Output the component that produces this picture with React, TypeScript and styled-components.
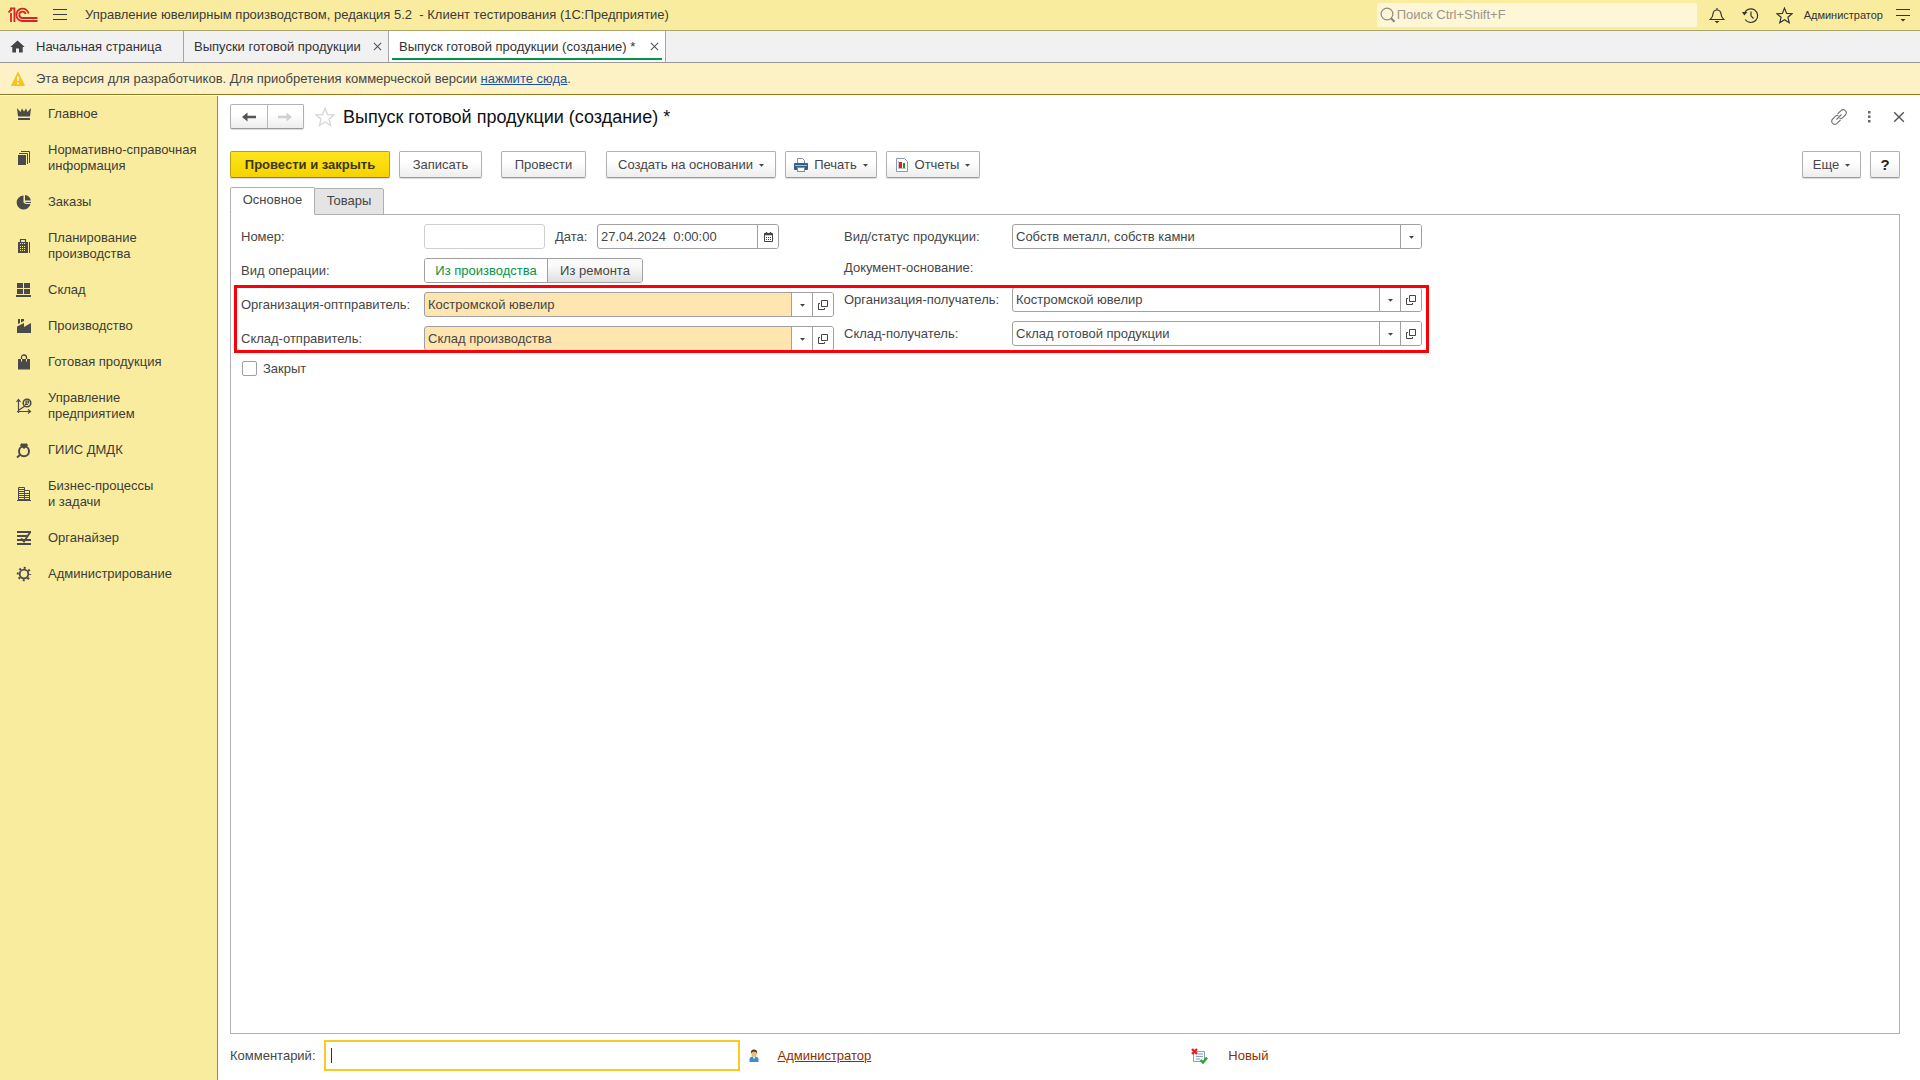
import React from "react";
import styled, { createGlobalStyle, css } from "styled-components";

const GlobalStyle = createGlobalStyle`
  *, *::before, *::after { box-sizing: border-box; }
  body { margin: 0; background: #fff; }
  body, button, input, select {
    font-family: "Liberation Sans", Arial, sans-serif;
    font-size: 13px;
    line-height: 16px;
    color: #464646;
  }
  button { cursor: pointer; }
  svg { display: block; flex: none; }
`;

/* ---------- frame ---------- */

const Page = styled.div`
  display: flex;
  flex-direction: column;
  min-height: 100vh;
`;

const TopBar = styled.header`
  display: flex;
  align-items: center;
  height: 31px;
  padding: 0 1px 0 8px;
  background: #faec9e;
  border-bottom: 1px solid #aaa56a;
  color: #3a3a3a;
`;

const IconButton = styled.button<{ $w: number }>`
  display: flex;
  align-items: center;
  justify-content: center;
  width: ${(p) => p.$w}px;
  height: 24px;
  padding: 0;
  border: 0;
  background: none;
  color: inherit;
`;

const AppTitle = styled.span`
  flex: 1;
  margin-left: 3px;
  white-space: pre;
`;

const SearchBox = styled.label`
  display: flex;
  align-items: center;
  gap: 1px;
  width: 320px;
  height: 24px;
  margin-right: 3px;
  padding-left: 3px;
  border-radius: 2px;
  background: #fdf7d8;
  color: #8d8b80;
`;

const SearchInput = styled.input`
  flex: 1;
  padding: 0 0 1px;
  border: 0;
  outline: 0;
  background: none;
  &::placeholder { color: #99968a; opacity: 1; }
`;

const UserName = styled.a`
  margin: 0 4px 0 2px;
  font-size: 11px;
  color: #333;
  text-decoration: none;
`;

const TabStrip = styled.nav`
  display: flex;
  height: 32px;
  background: #f1f1f1;
  border-bottom: 1px solid #999;
`;

const WindowTab = styled.div<{ $active?: boolean; $w: number }>`
  display: flex;
  align-items: center;
  justify-content: space-between;
  gap: 6px;
  min-width: ${(p) => p.$w}px;
  padding: 0 5px 0 10px;
  border-right: 1px solid #a6a6a6;
  ${(p) =>
    p.$active &&
    css`
      position: relative;
      background: #fff;
      &::after {
        content: "";
        position: absolute;
        inset: auto 3px 2px;
        height: 2px;
        background: #009646;
      }
    `}
`;

const TabLink = styled.a`
  display: flex;
  align-items: center;
  gap: 11px;
  color: #333;
  text-decoration: none;
  white-space: nowrap;
`;

const Notice = styled.div`
  display: flex;
  align-items: center;
  gap: 11px;
  height: 32px;
  padding-left: 11px;
  background: #fdf1c6;
  border-bottom: 1px solid #94781c;
`;

const NoticeLink = styled.a`
  color: #1d52a8;
`;

const Body = styled.div`
  display: flex;
  flex: 1;
`;

const Sidebar = styled.nav`
  width: 218px;
  flex: none;
  margin-top: 1px;
  background: #faec9e;
  border-right: 1px solid #8f8a5c;
`;

const SideLink = styled.a`
  display: flex;
  align-items: center;
  gap: 16px;
  padding: 10px 8px 10px 16px;
  color: #3c3c3c;
  text-decoration: none;
  white-space: pre-line;
`;

/* ---------- document ---------- */

const Main = styled.main`
  display: flex;
  flex-direction: column;
  flex: 1;
  min-width: 0;
  padding: 9px 20px 9px 12px;
`;

const TitleRow = styled.div`
  display: flex;
  align-items: center;
  height: 25px;
  color: #6b6b6b;
`;

const Title = styled.h1`
  flex: 1;
  margin: 0 0 0 8px;
  font-size: 18px;
  line-height: 24px;
  font-weight: 400;
  color: #111;
`;

const buttonFace = css`
  border: 1px solid #b0b0b0;
  border-bottom-color: #999;
  border-radius: 2px;
  background: linear-gradient(#fff 40%, #ededed);
  box-shadow: 0 1px 1px rgba(0, 0, 0, 0.15);
`;

const NavPair = styled.div`
  display: flex;
  width: 74px;
  height: 25px;
  margin-right: 11px;
  ${buttonFace}
`;

const NavButton = styled.button`
  flex: 1;
  display: grid;
  place-items: center;
  padding: 0;
  border: 0;
  background: none;
  color: #555;
  & + & { border-left: 1px solid #b8b8b8; color: #d0d0d0; }
`;

const HeadIcons = styled.div`
  display: flex;
  gap: 10px;
  margin-right: -9px;
`;

const Toolbar = styled.div`
  display: flex;
  gap: 9px;
  margin-top: 22px;
`;

const ToolButton = styled.button<{ $primary?: boolean; $w: number; $gap?: number }>`
  display: flex;
  align-items: center;
  justify-content: center;
  gap: 6px;
  min-width: ${(p) => p.$w}px;
  height: 27px;
  margin-left: ${(p) => p.$gap ?? 0}px;
  padding: 0 5px;
  white-space: nowrap;
  ${buttonFace}
  ${(p) =>
    p.$primary &&
    css`
      border-color: #b5a01a;
      border-bottom-color: #95830a;
      background: linear-gradient(#ffe51a, #f5d300);
      font-weight: 700;
      color: #3c3618;
    `}
`;

const HelpMark = styled.b`
  font-size: 15px;
  color: #222;
`;

const Spacer = styled.div`
  flex: 1;
`;

const PageTabs = styled.div`
  display: flex;
  align-items: flex-end;
  height: 28px;
  margin-top: 9px;
  margin-bottom: -1px;
`;

const PageTab = styled.button<{ $active?: boolean; $w: number }>`
  width: ${(p) => p.$w}px;
  height: 27px;
  padding: 0 0 2px;
  border: 1px solid #b0b0b0;
  border-radius: 2px 2px 0 0;
  background: #e4e4e4;
  & + & { margin-left: -1px; }
  ${(p) =>
    p.$active &&
    css`
      height: 28px;
      z-index: 1;
      background: #fff;
      border-bottom-color: #fff;
    `}
`;

const Sheet = styled.section`
  flex: 1;
  border: 1px solid #b0b0b0;
`;

const Form = styled.form`
  position: relative;
  display: flex;
  width: fit-content;
  gap: 10px;
  padding: 9px 9px 9px 10px;
`;

const Highlight = styled.div`
  position: absolute;
  inset: 70px 2px auto 3px;
  height: 68px;
  border: 3px solid #fb0007;
  pointer-events: none;
`;

const Column = styled.div`
  display: flex;
  flex-direction: column;
  gap: 9px;
`;

const Row = styled.div<{ $label: number }>`
  display: grid;
  grid-template-columns: ${(p) => p.$label}px 410px;
  align-items: center;
  min-height: 20px;
`;

const Inline = styled.div`
  display: flex;
  align-items: center;
`;

const Control = styled.div<{ $w?: number; $soft?: boolean; $fill?: string }>`
  display: flex;
  width: ${(p) => (p.$w ? `${p.$w}px` : "100%")};
  height: 25px;
  overflow: hidden;
  border: 1px solid ${(p) => (p.$soft ? "#cfcfcf" : "#a0a0a0")};
  border-radius: 3px;
  background: ${(p) => p.$fill ?? "#fff"};
`;

const TextInput = styled.input`
  flex: 1;
  min-width: 0;
  padding: 0 3px;
  border: 0;
  outline: 0;
  background: none;
`;

const SelectBox = styled.div`
  flex: 1;
  display: grid;
  grid-template-columns: 1fr 21px;
`;

const Select = styled.select`
  grid-area: 1 / 1 / 2 / 3;
  padding: 0 24px 0 3px;
  border: 0;
  outline: 0;
  appearance: none;
  background: none;
`;

const Arrow = styled.span`
  grid-area: 1 / 2;
  display: grid;
  place-items: center;
  border-left: 1px solid #a0a0a0;
  background: #fff;
  pointer-events: none;
`;

const FieldButton = styled.button`
  display: grid;
  place-items: center;
  width: 21px;
  padding: 0;
  border: 0;
  border-left: 1px solid #a0a0a0;
  background: #fff;
`;

const DateLabel = styled.label`
  width: 52px;
  padding-left: 10px;
`;

const Segments = styled(Control)`
  width: 219px;
`;

const Segment = styled.label<{ $w: number }>`
  display: grid;
  place-items: center;
  width: ${(p) => p.$w}px;
  background: linear-gradient(#fafafa 30%, #e0e0e0);
  & + & { border-left: 1px solid #a0a0a0; }
  &:has(input:checked) { background: #fff; color: #009646; }
  input { appearance: none; position: absolute; margin: 0; }
`;

const CheckRow = styled.label`
  display: flex;
  align-items: center;
  gap: 6px;
  height: 17px;
`;

const CheckBox = styled.input`
  appearance: none;
  width: 15px;
  height: 15px;
  margin: 0 0 0 1px;
  border: 1px solid #a0a0a0;
  border-radius: 2px;
  background: #fff;
`;

const Footer = styled.footer`
  display: flex;
  align-items: center;
  margin-top: 6px;
`;

const Comment = styled.input`
  width: 416px;
  height: 31px;
  margin: 0 9px 0 8px;
  padding: 0 6px;
  border: 2px solid #f9cb20;
  outline: 0;
  &:placeholder-shown {
    caret-color: transparent;
    background: linear-gradient(#333, #333) 5px center / 1px 15px no-repeat;
  }
`;

const UserLink = styled.a<{ $plain?: boolean }>`
  color: #8c2f00;
  text-decoration: ${(p) => (p.$plain ? "none" : "underline")};
`;

const Person = styled.span`
  width: 29px;
`;

const Status = styled.span`
  display: flex;
  align-items: center;
  gap: 20px;
  margin-left: 320px;
`;

/* ---------- drawings ---------- */

const Logo = () => (
  <svg width="30" height="16" viewBox="0 0 30 16" fill="none" stroke="#d8232a" strokeWidth="1.8">
    <path d="M0.500 5.400 3.400 2.500M3 15V6M3 4V1.400H6.400V15" />
    <path d="M20.600 6.500A6.200 6.200 0 1 0 14.600 14H29.500" />
    <path d="M17.600 7A3.200 3.200 0 1 0 14.600 11H29.500" />
  </svg>
);

const Burger = () => (
  <svg width="14" height="12" stroke="#3a3a3a" strokeWidth="1">
    <path d="M0 0.500H14M0 5.500H14M0 10.500H14" />
  </svg>
);

const SearchIcon = () => (
  <svg width="16" height="16" fill="none" stroke="currentColor" strokeWidth="1.2">
    <circle cx="7" cy="7" r="5.9" />
    <path d="M11 11.2 14.5 14.8" strokeWidth="2.2" />
  </svg>
);

const Bell = () => (
  <svg width="16" height="17" fill="none" stroke="#333" strokeWidth="1.2">
    <path d="M1.200 12.500H14.800C12.600 10.800 12.300 9.400 12 7C11.700 4.200 10.400 3 8 3C5.600 3 4.300 4.200 4 7C3.700 9.400 3.400 10.800 1.200 12.500ZM8 3V1" />
    <path d="M5.500 14H10.500L8 16.200Z" fill="#333" stroke="none" />
  </svg>
);

const HistoryIcon = () => (
  <svg width="17" height="17" fill="none" stroke="#333" strokeWidth="1.2">
    <path d="M2.600 6A6.800 6.800 0 1 1 3.200 12.500M9 4.500V8.800L11.500 11.500" />
    <path d="M0 5H5.400L2.300 8.400Z" fill="#333" stroke="none" />
  </svg>
);

const Star = ({ size, color }: { size: number; color: string }) => (
  <svg width={size} height={size} viewBox="0 0 20 20" fill="none" stroke={color} strokeWidth="1.4">
    <path d="M10 1.300 12.500 7.500 19 7.900 14 12.100 15.600 18.500 10 15 4.400 18.500 6 12.100 1 7.900 7.500 7.500Z" />
  </svg>
);

const Settings = () => (
  <svg width="14" height="14" stroke="#333">
    <path d="M0 1.500H14M0 7.500H14" />
    <path d="M4.500 11H9.500L7 13.500Z" fill="#333" stroke="none" />
  </svg>
);

const Home = () => (
  <svg width="15" height="13" fill="#444">
    <path d="M7.500 0.500 0.300 7H2.300V12.500H6V8.500H9V12.500H12.700V7H14.700Z" />
  </svg>
);

const Cross = ({ size }: { size: number }) => (
  <svg width={size} height={size} viewBox="0 0 10 10" fill="none" stroke="#555" strokeWidth="1.2">
    <path d="M1 1 9 9M9 1 1 9" />
  </svg>
);

const Warning = () => (
  <svg width="14" height="14">
    <path d="M7 0.500 13.500 13.500H0.500Z" fill="#fbc21a" stroke="#fbc21a" strokeLinejoin="round" />
    <path d="M7 4.500V9M7 10.500V12.300" stroke="#fff" strokeWidth="1.600" />
  </svg>
);

const ArrowLeft = ({ flip }: { flip?: boolean }) => (
  <svg width="14" height="10" viewBox="0 0 14 10">
    <path
      d={flip ? "M14 5 8.500 0.500V3.800H0V6.200H8.500V9.500Z" : "M0 5 5.500 0.500V3.800H14V6.200H5.500V9.500Z"}
      fill="currentColor"
    />
  </svg>
);

const LinkIcon = () => (
  <svg width="16" height="16" fill="none" stroke="#777" strokeWidth="1.100">
    <path d="M6.500 5 10 1.700A3 3 0 0 1 14.300 6L11 9.300Q9.800 10 8.500 9.300M9.500 11 6 14.300A3 3 0 0 1 1.700 10L5 6.700Q6.200 6 7.500 6.700M5.500 10.500 10.500 5.500" />
  </svg>
);

const Dots = () => (
  <svg width="3" height="12" fill="#666">
    <path d="M0 0H2.500V2.500H0ZM0 4.500H2.500V7H0ZM0 9H2.500V11.500H0Z" />
  </svg>
);

const Caret = () => (
  <svg width="5" height="5">
    <path d="M0 2H5L2.500 4.700Z" fill="#444" />
  </svg>
);

const Printer = () => (
  <svg width="14" height="14">
    <path d="M3.500 6V0.500H8.500L10.500 2.500V6" fill="#fff" stroke="#7d8ea0" />
    <rect x="0" y="5" width="14" height="7" rx="1" fill="#2f5d8c" />
    <path d="M1 7.500H13" stroke="#a8c0d8" />
    <rect x="3.500" y="9.500" width="7" height="4" fill="#fff" stroke="#7d8ea0" />
  </svg>
);

const Report = () => (
  <svg width="13" height="14">
    <path d="M0.500 0.500H8.500L11.500 3.500V13.500H0.500Z" fill="#fff" stroke="#8a97a6" />
    <path d="M2.500 3V10.500H10" fill="none" stroke="#b9c2cc" />
    <rect x="3" y="4" width="3" height="6" fill="#e32119" />
    <rect x="7" y="5" width="2" height="5" fill="#2a8f2a" />
  </svg>
);

const Calendar = () => (
  <svg width="9" height="10" fill="none" stroke="#444">
    <path d="M0.500 1.500H8.500V9.500H0.500Z" />
    <path d="M0 2.500H9M2.500 0V2M6.500 0V2" strokeWidth="1.400" />
    <path d="M2 5.500H7M2 7.500H7" strokeDasharray="1 1" />
  </svg>
);

const OpenIcon = () => (
  <svg width="10" height="10" fill="none" stroke="#444">
    <path d="M3.500 0.500H9.500V6.500H3.500ZM2 3.500H0.500V9.500H6.500V8" />
  </svg>
);

const PersonIcon = () => (
  <svg width="10" height="14">
    <path d="M0.500 13V10Q0.500 8 3 7.500H7Q9.500 8 9.500 10V13Z" fill="#3a8fc4" />
    <path d="M3.800 7.500H6.200L5 10.500Z" fill="#fff" />
    <ellipse cx="5" cy="4.500" rx="2.800" ry="3.300" fill="#f0b873" />
    <path d="M1.800 4.500Q1.600 0.600 5 0.600T8.200 4.500Q7 2.500 5 2.500T1.800 4.500Z" fill="#4a3b2a" />
  </svg>
);

const StatusIcon = () => (
  <svg width="17" height="16" fill="none">
    <path d="M2.500 3.500H13.500V13.500H2.500Z" fill="#f3f6f9" stroke="#93a2b3" />
    <path d="M7 6H12M5 8.500H12M5 11H9" stroke="#8aa0b8" />
    <path d="M1 1 6 6M6 1 1 6" stroke="#df2020" strokeWidth="2.400" />
    <path d="M9.500 12 12 14.500 16 9.500" stroke="#23a832" strokeWidth="2.400" />
  </svg>
);

const ink = "#4a4a4a";

const sideIcons: Record<string, React.ReactNode> = {
  crown: <path fill={ink} d="M1 2 4.500 6 6 2.500 8 5.500 10 2.500 11.500 6 15 2 14 10.500H2ZM2 12H14V14H2Z" />,
  books: (
    <g fill="none" stroke={ink}>
      <path d="M2 5H10V15H2Z" fill={ink} stroke="none" />
      <path d="M3 3.500H11.500V14M5 1.500H13.500V13" />
    </g>
  ),
  pie: (
    <path fill={ink} d="M7.500 1.500V8.500L9.500 10H14.500A7 7 0 1 1 7.500 1.500ZM9 1A6 6 0 0 1 14.800 6.500H9ZM9 8H15V9H10Z" />
  ),
  calc: (
    <g>
      <path d="M4.500 5V1.500H9.500V5" fill="none" stroke={ink} strokeWidth="1.200" />
      <path d="M2 4H12V15H2Z" fill={ink} />
      <path d="M4 5.500H10M4 8.500H10M4 10.500H10M4 12.500H10" stroke="#faec9e" strokeDasharray="1 1" />
      <path d="M13.500 4V15" stroke={ink} />
    </g>
  ),
  store: <path fill={ink} d="M1 1H7V6H1ZM8 1H14V6H8ZM1 7H7V12H1ZM8 7H14V12H8ZM0 13H15V15H0Z" />,
  factory: <path fill={ink} d="M2 1H4V5L2 6ZM5 1H8V3L5 4.500ZM1 15V8.500L8 5V9L15 5V15Z" />,
  bag: (
    <g>
      <path d="M2 5H14V15.500H2Z" fill={ink} />
      <path d="M5.500 5V3.500Q5.500 1 8 1T10.500 3.500V5" fill="none" stroke={ink} strokeWidth="1.300" />
      <path d="M5.500 5V7.500M10.500 5V7.500" stroke="#faec9e" />
    </g>
  ),
  plan: (
    <g fill="none" stroke={ink} strokeWidth="1.200">
      <path d="M2.500 2V15M1 13.500H14M3 12 9 8M0.500 4 2.500 1.500 4.500 4M12 11.500 14.500 13.500 12 15.500" />
      <circle cx="11" cy="5" r="3.800" strokeWidth="1.600" />
      <path d="M10 7V3H12.500V5H10M9 6.500H12" />
    </g>
  ),
  ring: (
    <g fill="none" stroke={ink} strokeWidth="2">
      <circle cx="8" cy="9.300" r="5" />
      <path d="M5 1.500H11L12 3.500 8 7 4 3.500Z" fill={ink} stroke="none" />
      <path d="M4.500 12.500 1 15.500" />
    </g>
  ),
  building: (
    <g fill="none" stroke={ink}>
      <path d="M2.500 1.500H8.500V14.500H2.500ZM8.500 4.500H13.500V14.500H8.500ZM1 14.500H15" />
      <path d="M3 3.500H8M3 5.500H8M3 7.500H13M3 9.500H13M3 11.500H13M3 13.500H13" />
    </g>
  ),
  organizer: (
    <g fill="none" stroke={ink} strokeWidth="2">
      <path d="M1 2H15M1 6H11M1 10H15M1 14H15" />
      <path d="M14 2.500 8 11.500 5 8.500" strokeWidth="1.800" />
    </g>
  ),
  gear: (
    <g fill="none" stroke={ink}>
      <circle cx="8" cy="8" r="4.300" strokeWidth="1.800" />
      <circle cx="8" cy="8" r="6.200" strokeWidth="2" strokeDasharray="2 2.870" strokeDashoffset="1" />
    </g>
  ),
};

const sections: [string, string][] = [
  ["crown", "Главное"],
  ["books", "Нормативно-справочная\nинформация"],
  ["pie", "Заказы"],
  ["calc", "Планирование\nпроизводства"],
  ["store", "Склад"],
  ["factory", "Производство"],
  ["bag", "Готовая продукция"],
  ["plan", "Управление\nпредприятием"],
  ["ring", "ГИИС ДМДК"],
  ["building", "Бизнес-процессы\nи задачи"],
  ["organizer", "Органайзер"],
  ["gear", "Администрирование"],
];

/* ---------- composed parts ---------- */

type DropFieldProps = { id: string; label: string; value: string; labelWidth: number; fill?: string; open?: boolean };

const DropField = ({ id, label, value, labelWidth, fill, open = true }: DropFieldProps) => (
  <Row $label={labelWidth}>
    <label htmlFor={id}>{label}</label>
    <Control $fill={fill}>
      <SelectBox>
        <Select id={id} defaultValue={value}>
          <option>{value}</option>
        </Select>
        <Arrow><Caret /></Arrow>
      </SelectBox>
      {open && <FieldButton type="button" aria-label="Открыть"><OpenIcon /></FieldButton>}
    </Control>
  </Row>
);

export default function App() {
  return (
    <Page>
      <GlobalStyle />
      <TopBar>
        <Logo />
        <IconButton $w={44} aria-label="Меню"><Burger /></IconButton>
        <AppTitle>{"Управление ювелирным производством, редакция 5.2  - Клиент тестирования (1С:Предприятие)"}</AppTitle>
        <SearchBox>
          <SearchIcon />
          <SearchInput type="search" aria-label="Поиск" placeholder="Поиск Ctrl+Shift+F" />
        </SearchBox>
        <IconButton $w={34} aria-label="Уведомления"><Bell /></IconButton>
        <IconButton $w={34} aria-label="История"><HistoryIcon /></IconButton>
        <IconButton $w={34} aria-label="Избранное"><Star size={17} color="#333" /></IconButton>
        <UserName href="#">Администратор</UserName>
        <IconButton $w={32} aria-label="Настройки"><Settings /></IconButton>
      </TopBar>
      <TabStrip>
        <WindowTab $w={184}>
          <TabLink href="#"><Home />Начальная страница</TabLink>
        </WindowTab>
        <WindowTab $w={205}>
          <TabLink href="#">Выпуски готовой продукции</TabLink>
          <IconButton $w={12} aria-label="Закрыть вкладку"><Cross size={9} /></IconButton>
        </WindowTab>
        <WindowTab $w={277} $active>
          <TabLink href="#">Выпуск готовой продукции (создание) *</TabLink>
          <IconButton $w={12} aria-label="Закрыть вкладку"><Cross size={9} /></IconButton>
        </WindowTab>
      </TabStrip>
      <Notice>
        <Warning />
        <span>
          Эта версия для разработчиков. Для приобретения коммерческой версии <NoticeLink href="#">нажмите сюда</NoticeLink>.
        </span>
      </Notice>
      <Body>
        <Sidebar>
          {sections.map(([icon, name]) => (
            <SideLink href="#" key={name}>
              <svg width="16" height="16">{sideIcons[icon]}</svg>
              {name}
            </SideLink>
          ))}
        </Sidebar>
        <Main>
          <TitleRow>
            <NavPair>
              <NavButton aria-label="Назад"><ArrowLeft /></NavButton>
              <NavButton aria-label="Вперед"><ArrowLeft flip /></NavButton>
            </NavPair>
            <Star size={20} color="#d8d8d8" />
            <Title>Выпуск готовой продукции (создание) *</Title>
            <HeadIcons>
              <IconButton $w={20} aria-label="Ссылка"><LinkIcon /></IconButton>
              <IconButton $w={20} aria-label="Дополнительно"><Dots /></IconButton>
              <IconButton $w={20} aria-label="Закрыть"><Cross size={12} /></IconButton>
            </HeadIcons>
          </TitleRow>
          <Toolbar>
            <ToolButton $primary $w={160}>Провести и закрыть</ToolButton>
            <ToolButton $w={83}>Записать</ToolButton>
            <ToolButton $w={85} $gap={10}>Провести</ToolButton>
            <ToolButton $w={170} $gap={11}>Создать на основании<Caret /></ToolButton>
            <ToolButton $w={92}><Printer />Печать<Caret /></ToolButton>
            <ToolButton $w={94}><Report />Отчеты<Caret /></ToolButton>
            <Spacer />
            <ToolButton $w={59}>Еще<Caret /></ToolButton>
            <ToolButton $w={30}><HelpMark>?</HelpMark></ToolButton>
          </Toolbar>
          <PageTabs>
            <PageTab $active $w={85}>Основное</PageTab>
            <PageTab $w={70}>Товары</PageTab>
          </PageTabs>
          <Sheet>
            <Form>
              <Column>
                <Row $label={183}>
                  <label htmlFor="number">Номер:</label>
                  <Inline>
                    <Control $w={121} $soft><TextInput id="number" /></Control>
                    <DateLabel htmlFor="date">Дата:</DateLabel>
                    <Control $w={182}>
                      <TextInput id="date" defaultValue="27.04.2024  0:00:00" />
                      <FieldButton type="button" aria-label="Календарь"><Calendar /></FieldButton>
                    </Control>
                  </Inline>
                </Row>
                <Row $label={183}>
                  <span>Вид операции:</span>
                  <Segments>
                    <Segment $w={122}><input type="radio" name="operation" defaultChecked />Из производства</Segment>
                    <Segment $w={95}><input type="radio" name="operation" />Из ремонта</Segment>
                  </Segments>
                </Row>
                <DropField id="orgFrom" label="Организация-оптправитель:" value="Костромской ювелир" labelWidth={183} fill="#ffe5b0" />
                <DropField id="storeFrom" label="Склад-отправитель:" value="Склад производства" labelWidth={183} fill="#ffe5b0" />
                <CheckRow><CheckBox type="checkbox" />Закрыт</CheckRow>
              </Column>
              <Column>
                <DropField id="kind" label="Вид/статус продукции:" value="Собств металл, собств камни" labelWidth={168} open={false} />
                <Row $label={168}><span>Документ-основание:</span></Row>
                <DropField id="orgTo" label="Организация-получатель:" value="Костромской ювелир" labelWidth={168} />
                <DropField id="storeTo" label="Склад-получатель:" value="Склад готовой продукции" labelWidth={168} />
              </Column>
              <Highlight />
            </Form>
          </Sheet>
          <Footer>
            <label htmlFor="comment">Комментарий:</label>
            <Comment id="comment" placeholder=" " />
            <Person><PersonIcon /></Person>
            <UserLink href="#">Администратор</UserLink>
            <Status>
              <StatusIcon />
              <UserLink $plain href="#">Новый</UserLink>
            </Status>
          </Footer>
        </Main>
      </Body>
    </Page>
  );
}
